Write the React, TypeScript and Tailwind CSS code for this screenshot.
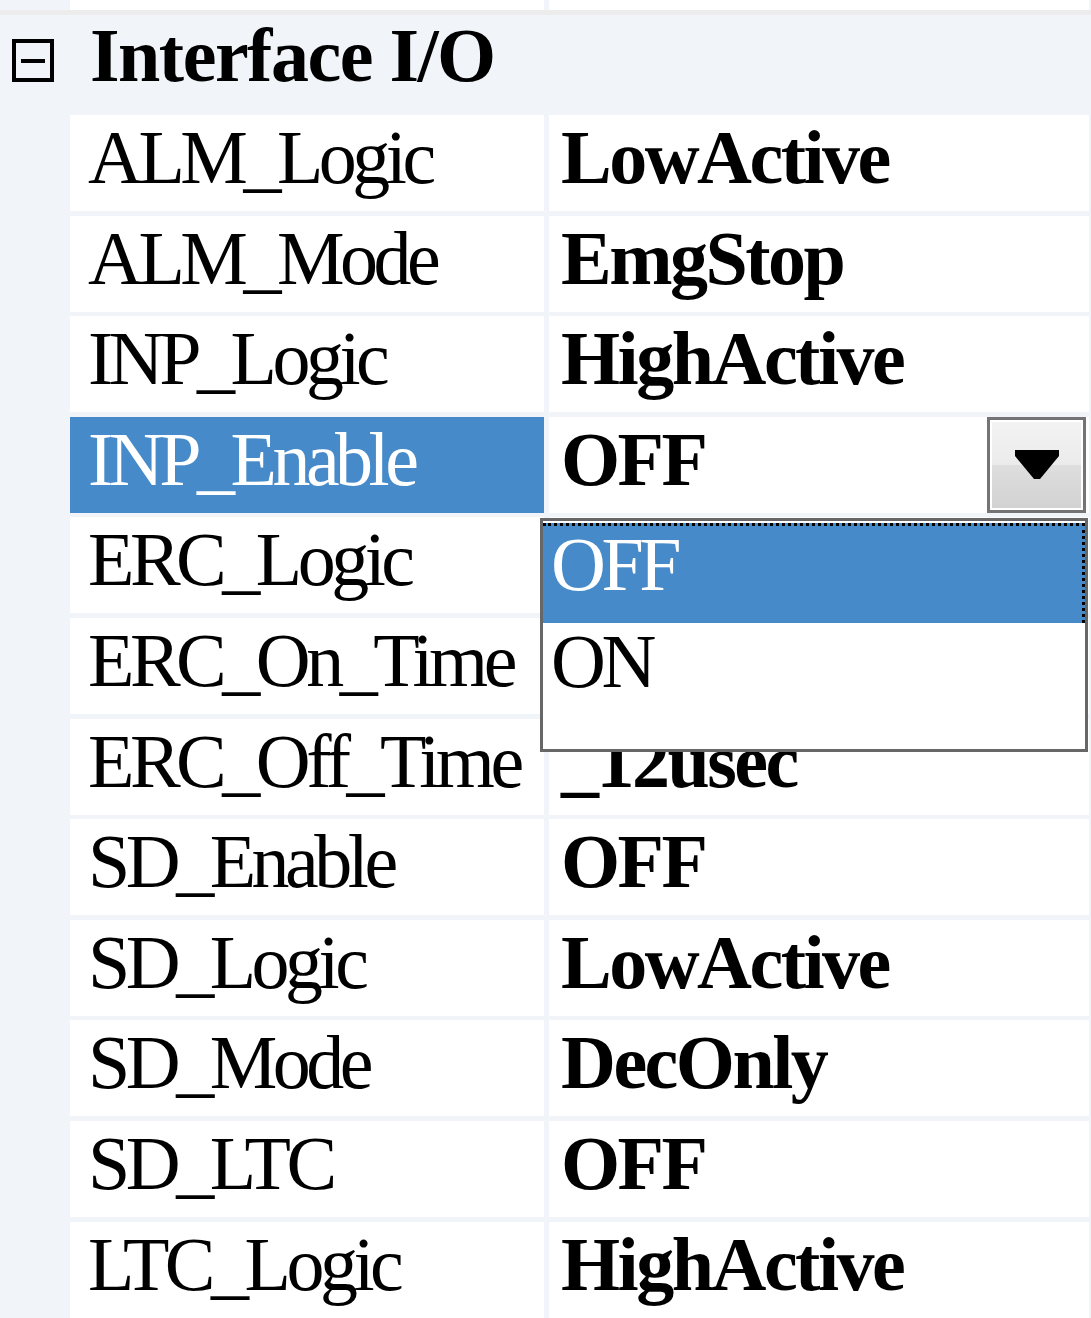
import React from "react";

type Row = { name: string; value: string };

const ROWS: Row[] = [
  { name: "ALM_Logic", value: "LowActive" },
  { name: "ALM_Mode", value: "EmgStop" },
  { name: "INP_Logic", value: "HighActive" },
  { name: "INP_Enable", value: "OFF" },
  { name: "ERC_Logic", value: "LowActive" },
  { name: "ERC_On_Time", value: "_12usec" },
  { name: "ERC_Off_Time", value: "_12usec" },
  { name: "SD_Enable", value: "OFF" },
  { name: "SD_Logic", value: "LowActive" },
  { name: "SD_Mode", value: "DecOnly" },
  { name: "SD_LTC", value: "OFF" },
  { name: "LTC_Logic", value: "HighActive" },
];

const SELECTED = "INP_Enable";

// 드롭다운 버튼
const DropButton: React.FC = () => (
  <div className="absolute right-[3px] top-0 h-[96px] w-[99px] border-[3px] border-[#747474] bg-white p-[2px]">
    <div className="relative flex h-full w-full flex-col">
      <div className="h-1/2 bg-gradient-to-b from-[#f3f3f3] to-[#ebebeb]" />
      <div className="h-1/2 bg-gradient-to-b from-[#dedede] to-[#d2d2d2]" />
      <div className="absolute inset-0 flex items-center justify-center">
        <svg width="44" height="29" viewBox="0 0 44 29">
          <polygon points="0,0 44,0 44,6 25,29 19,29 0,6" fill="#000" />
        </svg>
      </div>
    </div>
  </div>
);

const App: React.FC = () => {
  return (
    <div
      className="relative h-[1318px] w-[1091px] overflow-hidden bg-[#f1f4f9] text-black"
      style={{ fontFamily: '"Liberation Serif", "Times New Roman", serif' }}
    >
      {/* 상단 잘린 행 */}
      <div className="flex h-[10px]">
        <div className="w-[70px]" />
        <div className="w-[474px] bg-white" />
        <div className="w-[5px]" />
        <div className="flex-1 bg-white" />
        <div className="w-[2px]" />
      </div>
      <div className="h-[5px] bg-[#ececec]" />

      {/* 카테고리 */}
      <div className="flex h-[100px] items-start pt-[2px]">
        <div className="ml-[12px] mt-[22px] flex h-[43px] w-[42px] items-center justify-center border-[4px] border-black">
          <div className="h-[4px] w-[24px] bg-black" />
        </div>
        <div className="ml-[36px] text-[76px] font-bold leading-[76px] tracking-[-1.5px]">Interface I/O</div>
      </div>

      {/* 속성 행들 */}
      <div className="flex flex-col gap-[4.6px]">
        {ROWS.map((row) => {
          const selected = row.name === SELECTED;
          return (
            <div key={row.name} className="flex h-[96px]">
              <div className="w-[70px]" />
              <div
                className={
                  selected
                    ? "w-[474px] bg-[#468ac9] pl-[18px] pt-[4px] text-[76px] leading-[76px] tracking-[-4.5px] text-white"
                    : "w-[474px] bg-white pl-[18px] pt-[4px] text-[76px] leading-[76px] tracking-[-4.5px]"
                }
              >
                {row.name}
              </div>
              <div className="w-[5px]" />
              <div className="relative flex-1 bg-white pl-[12px] pt-[4px] text-[76px] font-bold leading-[76px] tracking-[-2.5px]">
                {row.value}
                {selected && <DropButton />}
              </div>
              <div className="w-[2px]" />
            </div>
          );
        })}
      </div>

      {/* 드롭다운 목록 */}
      <div className="absolute left-[540px] top-[518px] h-[234px] w-[548px] border-[3px] border-[#676767] bg-white">
        <div className="mt-[2px] h-[100px] border-r-[3px] border-t-[3px] border-dotted border-black bg-[#468ac9] pl-[8px] text-[76px] leading-[76px] tracking-[-4.5px] text-white">
          OFF
        </div>
        <div className="h-[98px] pl-[8px] text-[76px] leading-[76px] tracking-[-4.5px]">ON</div>
      </div>
    </div>
  );
};

export default App;
